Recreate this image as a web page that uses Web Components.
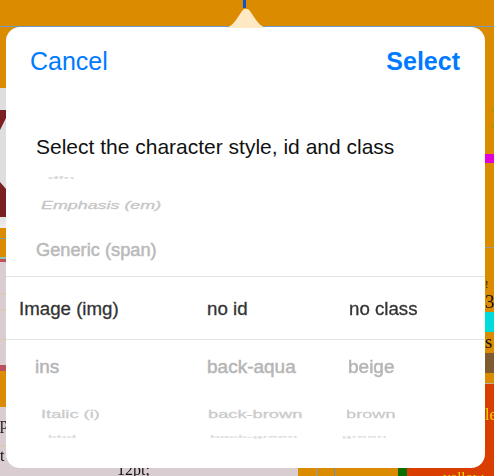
<!DOCTYPE html>
<html lang="en">
<head>
<meta charset="utf-8">
<title>Select the character style</title>
<style>
  html, body { margin: 0; padding: 0; background: #d9cdd2; }
  body { width: 494px; height: 476px; overflow: hidden; font-family: "Liberation Sans", Arial, sans-serif; }
</style>
</head>
<body>
<page-backdrop>
  <picker-popover>
    <wheel-row style="--h:10px;--c1:42px;--sy:.2;--ink:#d6d6d6"><span slot="a">dfn</span></wheel-row>
    <wheel-row style="--h:38px;--top:6px;--c1:35px;--sy:.62;--sx:.94;--ink:#c6c6c6"><em slot="a">Emphasis (em)</em></wheel-row>
    <wheel-row style="--h:55px;--top:3px;--c1:30px;--sy:.92;--sx:.96;--ink:#b9b9b9"><span slot="a">Generic (span)</span></wheel-row>
    <wheel-row selected style="--h:64px;--top:2px;--fs:18.7px;--st:.3px;--c1:13px;--c2:201px;--c3:343px;--ink:#333"><span slot="a">Image (img)</span><span slot="b">no id</span><span slot="c">no class</span></wheel-row>
    <wheel-row style="--h:54px;--c1:29px;--c2:201px;--c3:342px;--sy:.92;--ink:#b5b5b5"><span slot="a">ins</span><span slot="b">back-aqua</span><span slot="c">beige</span></wheel-row>
    <wheel-row style="--h:36px;--top:4px;--c1:35px;--c2:202px;--c3:340px;--sy:.62;--sx:.96;--ink:#cbcbcb"><span slot="a">Italic (i)</span><span slot="b">back-brown</span><span slot="c">brown</span></wheel-row>
    <wheel-row style="--h:14px;--c1:42px;--c2:204px;--c3:336px;--sy:.2;--sx:.92;--ink:#dcdcdc"><span slot="a">kbd</span><span slot="b">back-green</span><span slot="c">green</span></wheel-row>
  </picker-popover>
</page-backdrop>

<script>
window.customElements.define('colour-strips', class extends HTMLElement {
  constructor() {
    super()
    const shadowRoot = this.attachShadow({ mode: 'open' })
    shadowRoot.innerHTML = `
    <style>
      :host { display: flex; flex-flow: column nowrap; overflow: hidden; font: 16px "Liberation Serif", serif; color: #111; }
      ::slotted(*) { display: block; flex: none; overflow: hidden; white-space: nowrap; }
    </style>
    <slot></slot>`
  }
})

window.customElements.define('page-backdrop', class extends HTMLElement {
  constructor() {
    super()
    const shadowRoot = this.attachShadow({ mode: 'open' })
    shadowRoot.innerHTML = `
    <style>
      :host {
        display: block;
        position: relative;
        width: 494px;
        height: 476px;
        overflow: hidden;
        filter: blur(.35px);
        --orange: #db8b00;
        --pink: #d9cdd2;
        --red: #d93d00;
      }
      .grid {
        display: grid;
        grid-template-columns: 6px 1fr 9px;
        grid-template-rows: 27px 441px 8px;
        height: 476px;
      }
      .top { grid-column: 1 / 4; background: var(--orange); border-bottom: 1px solid #6e9cc4; box-sizing: border-box; }
      .top i { display: block; width: 3px; height: 8px; margin-left: 243px; background: #0d55cf; }
      .mid { display: flex; flex-flow: column nowrap; justify-content: space-between; background: var(--orange); }
      .mid b { display: flex; height: 20px; margin-top: auto; }
      .mid b i { flex: 1; background: var(--pink); }
      .mid b i + i { background: var(--red); }
      .bottom { grid-column: 1 / 4; display: flex; overflow: hidden; font: 16px "Liberation Serif", serif; color: #111; }
      .bottom div { flex: none; height: 8px; overflow: hidden; }
      .pt { width: 298px; background: var(--pink); padding-left: 117px; box-sizing: border-box; line-height: 8px; }
      .pt span { display: block; margin-top: -2px; }
      .cols { width: 100px; background: linear-gradient(to right, var(--orange) 18px, #7aa2c8 18px, #7aa2c8 19px, var(--orange) 19px, var(--orange) 36px, #5d90c8 36px, #5d90c8 37px, var(--orange) 37px); }
      .green { width: 9px; background: #0b6e00; }
      .yel { flex: 1 !important; background: var(--red); color: #ecd900; padding-left: 36px; font-size: 15px; line-height: 8px; }
      .yel span { display: block; margin-top: 5px; }
      .s { background: var(--orange); }
      svg { display: block; }
    </style>
    <div class="grid">
      <div class="top"><i></i></div>
      <colour-strips>
        <div class="s" style="height:61px"></div>
        <div style="height:140px;background:linear-gradient(#dedede 90%, #f0eeee)">
          <svg width="6" height="140" viewBox="0 0 6 140"><path d="M0 22H6V30L0 42ZM0 94L6 101V129H0Z" fill="#7a1f22"/></svg>
        </div>
        <div class="s" style="height:10px;border-bottom:1px solid #7f9aa0"></div>
        <div class="s" style="height:18px"></div>
        <div style="height:2px;background:#86c6b6"></div>
        <div style="height:3px;background:#c0505e"></div>
        <div style="height:31px;background:#d9cdd2;border-bottom:1px solid #e3c6a8"></div>
        <div style="height:15px;background:#d9cdd2;border-bottom:1px solid #e3c6a8"></div>
        <div style="height:29px;background:#d9cdd2;border-bottom:1px solid #e3c6a8"></div>
        <div style="height:25px;background:#d9cdd2"></div>
        <div style="height:6px;background:#b9525e"></div>
        <div class="s" style="height:36px"></div>
        <div style="height:38px;background:#d9cdd2;line-height:34px;border-bottom:1px solid #e3c6a8">p</div>
        <div style="height:23px;background:#d9cdd2;line-height:20px;border-bottom:1px solid #e3c6a8">t</div>
      </colour-strips>
      <div class="mid"><b><i></i><i></i></b></div>
      <colour-strips>
        <div class="s" style="height:127px;padding:78px 0 0 6px;box-sizing:border-box;color:#52b010;line-height:28px;font-size:26px">I</div>
        <div style="height:9px;background:#e000d8"></div>
        <div class="s" style="height:84px;border-bottom:1px solid #9a9a90"></div>
        <div class="s" style="height:29px"></div>
        <div class="s" style="height:14px;line-height:14px;font-size:11px">!</div>
        <div class="s" style="height:21px;line-height:21px;font-size:19px">3</div>
        <div style="height:20px;background:#00dcdc"></div>
        <div class="s" style="height:21px;line-height:19px;font-size:19px">s</div>
        <div style="height:20px;background:#7f5a2e"></div>
        <div class="s" style="height:10px;border-bottom:1px solid #b9b0a0"></div>
        <div style="height:85px;background:#d93d00;color:#ecd900;line-height:62px;font-size:16px">le</div>
      </colour-strips>
      <div class="bottom">
        <div class="pt"><span>12pt;</span></div>
        <div class="cols"></div>
        <div class="green"></div>
        <div class="yel"><span>yellow</span></div>
      </div>
    </div>
    <slot></slot>`
  }
})

window.customElements.define('picker-popover', class extends HTMLElement {
  constructor() {
    super()
    const shadowRoot = this.attachShadow({ mode: 'open' })
    shadowRoot.innerHTML = `
    <style>
      :host {
        display: block;
        position: absolute;
        left: 6px;
        top: 27px;
        width: 479px;
        height: 441px;
        background: #fff;
        border-radius: 14px;
        font-family: "Liberation Sans", Arial, sans-serif;
      }
      .arrow { position: absolute; left: 215px; top: -21px; }
      nav {
        display: flex;
        justify-content: space-between;
        align-items: center;
        height: 68px;
        padding: 0 25px 0 24px;
        font-size: 25px;
        color: #007aff;
      }
      nav b { font-weight: 700; }
      h1 {
        margin: 0;
        padding: 39px 0 13px 30px;
        font-size: 21px;
        line-height: 26px;
        font-weight: 400;
        color: #111;
      }
    </style>
    <svg class="arrow" width="50" height="22" viewBox="0 0 50 22"><path d="M4 22C9 21 12 18 15 14L21 5C23 2 27 2 29 5L35 14C38 18 41 21 46 22Z" fill="#fee9c4"/></svg>
    <nav><span>Cancel</span><b>Select</b></nav>
    <h1>Select the character style, id and class</h1>
    <slot></slot>`
  }
})

window.customElements.define('wheel-row', class extends HTMLElement {
  constructor() {
    super()
    const shadowRoot = this.attachShadow({ mode: 'open' })
    shadowRoot.innerHTML = `
    <style>
      :host {
        display: grid;
        grid-template-columns: var(--c1, 30px) calc(var(--c2, 201px) - var(--c1, 30px)) calc(var(--c3, 342px) - var(--c2, 201px)) 1fr;
        grid-template-rows: minmax(0, 1fr);
        align-items: center;
        box-sizing: border-box;
        height: var(--h);
        padding-top: var(--top, 0);
        font-size: var(--fs, 19px);
        -webkit-text-stroke: var(--st, .5px) var(--ink);
        color: var(--ink);
      }
      :host([selected]) {
        border-top: 1px solid #e3e3e3;
        border-bottom: 1px solid #e3e3e3;
      }
      ::slotted(*) {
        display: block;
        white-space: nowrap;
        transform-origin: 0 50%;
        transform: scale(var(--sx, 1), var(--sy, 1));
      }
      ::slotted([slot="a"]) { grid-column: 2; grid-row: 1; }
      ::slotted([slot="b"]) { grid-column: 3; grid-row: 1; }
      ::slotted([slot="c"]) { grid-column: 4; grid-row: 1; }
      .a, .b, .c { display: contents; }
    </style>
    <span class="a"><slot name="a"></slot></span>
    <span class="b"><slot name="b"></slot></span>
    <span class="c"><slot name="c"></slot></span>`
  }
})
</script>
</body>
</html>
